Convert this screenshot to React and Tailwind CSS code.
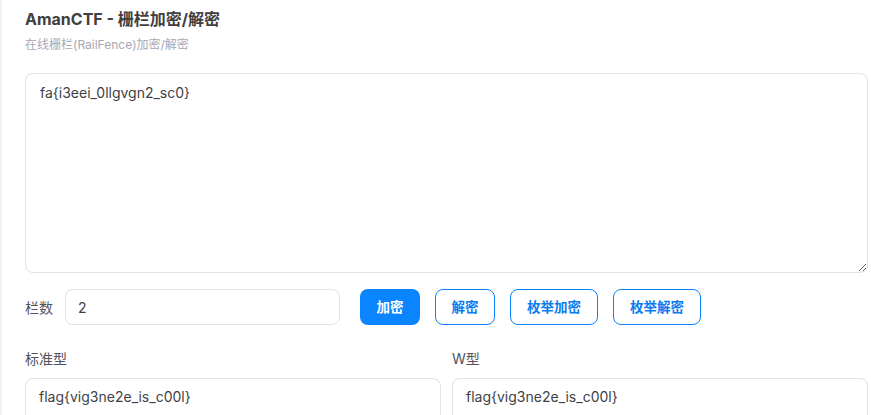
import React, { useState } from 'react';

const App = () => {
  const [text, setText] = useState('fa{i3eei_0llgvgn2_sc0}');
  const [rails, setRails] = useState('2');

  return (
    <div
      className="min-h-[415px] bg-white border-l-2 border-[#f2f2f2] pl-[23px] pr-[3px] pt-[8px]"
      style={{ fontFamily: 'Inter, "Noto Sans CJK SC", sans-serif' }}
    >
      <h1 className="text-[16px] font-bold text-[#404040] leading-[22px]">AmanCTF - 栅栏加密/解密</h1>
      <p className="text-[12px] text-[#a8a8b4] mt-[7px] leading-[16px]">在线栅栏(RailFence)加密/解密</p>

      <textarea
        value={text}
        onChange={(e) => setText(e.target.value)}
        className="mt-[20px] block w-full h-[200px] border border-[#e2e2e2] rounded-lg px-[14px] py-[9px] text-[14px] text-[#3f3f46] leading-[20px] outline-none"
        style={{ fontFamily: 'Inter, sans-serif' }}
      />

      <div className="flex items-center mt-[16px]">
        <span className="text-[14px] text-[#52525b] w-[40px]">栏数</span>
        <input
          value={rails}
          onChange={(e) => setRails(e.target.value)}
          className="w-[275px] h-[36px] border border-[#e2e2e2] rounded-lg px-[12px] text-[14px] text-[#3f3f46] outline-none"
        />
        <div className="flex gap-[15px] ml-[20px]">
          <button className="h-[36px] w-[60px] rounded-lg bg-[#0a84ff] text-white text-[13.5px] font-bold">加密</button>
          <button className="h-[36px] w-[60px] rounded-lg border border-[#0a84ff] text-[#0a7cf0] text-[13.5px] font-bold">解密</button>
          <button className="h-[36px] w-[88px] rounded-lg border border-[#0a84ff] text-[#0a7cf0] text-[13.5px] font-bold">枚举加密</button>
          <button className="h-[36px] w-[88px] rounded-lg border border-[#0a84ff] text-[#0a7cf0] text-[13.5px] font-bold">枚举解密</button>
        </div>
      </div>

      <div className="grid grid-cols-2 gap-[11px] mt-[24px]">
        {['标准型', 'W型'].map((label) => (
          <div key={label}>
            <div className="text-[14px] text-[#52525b] leading-[20px]">{label}</div>
            <div className="mt-[9px] h-[60px] border border-[#e2e2e2] rounded-lg px-[13px] py-[8px] text-[14px] text-[#3f3f46] leading-[20px]">
              flag{'{'}vig3ne2e_is_c00l{'}'}
            </div>
          </div>
        ))}
      </div>
    </div>
  );
};

export default App;
